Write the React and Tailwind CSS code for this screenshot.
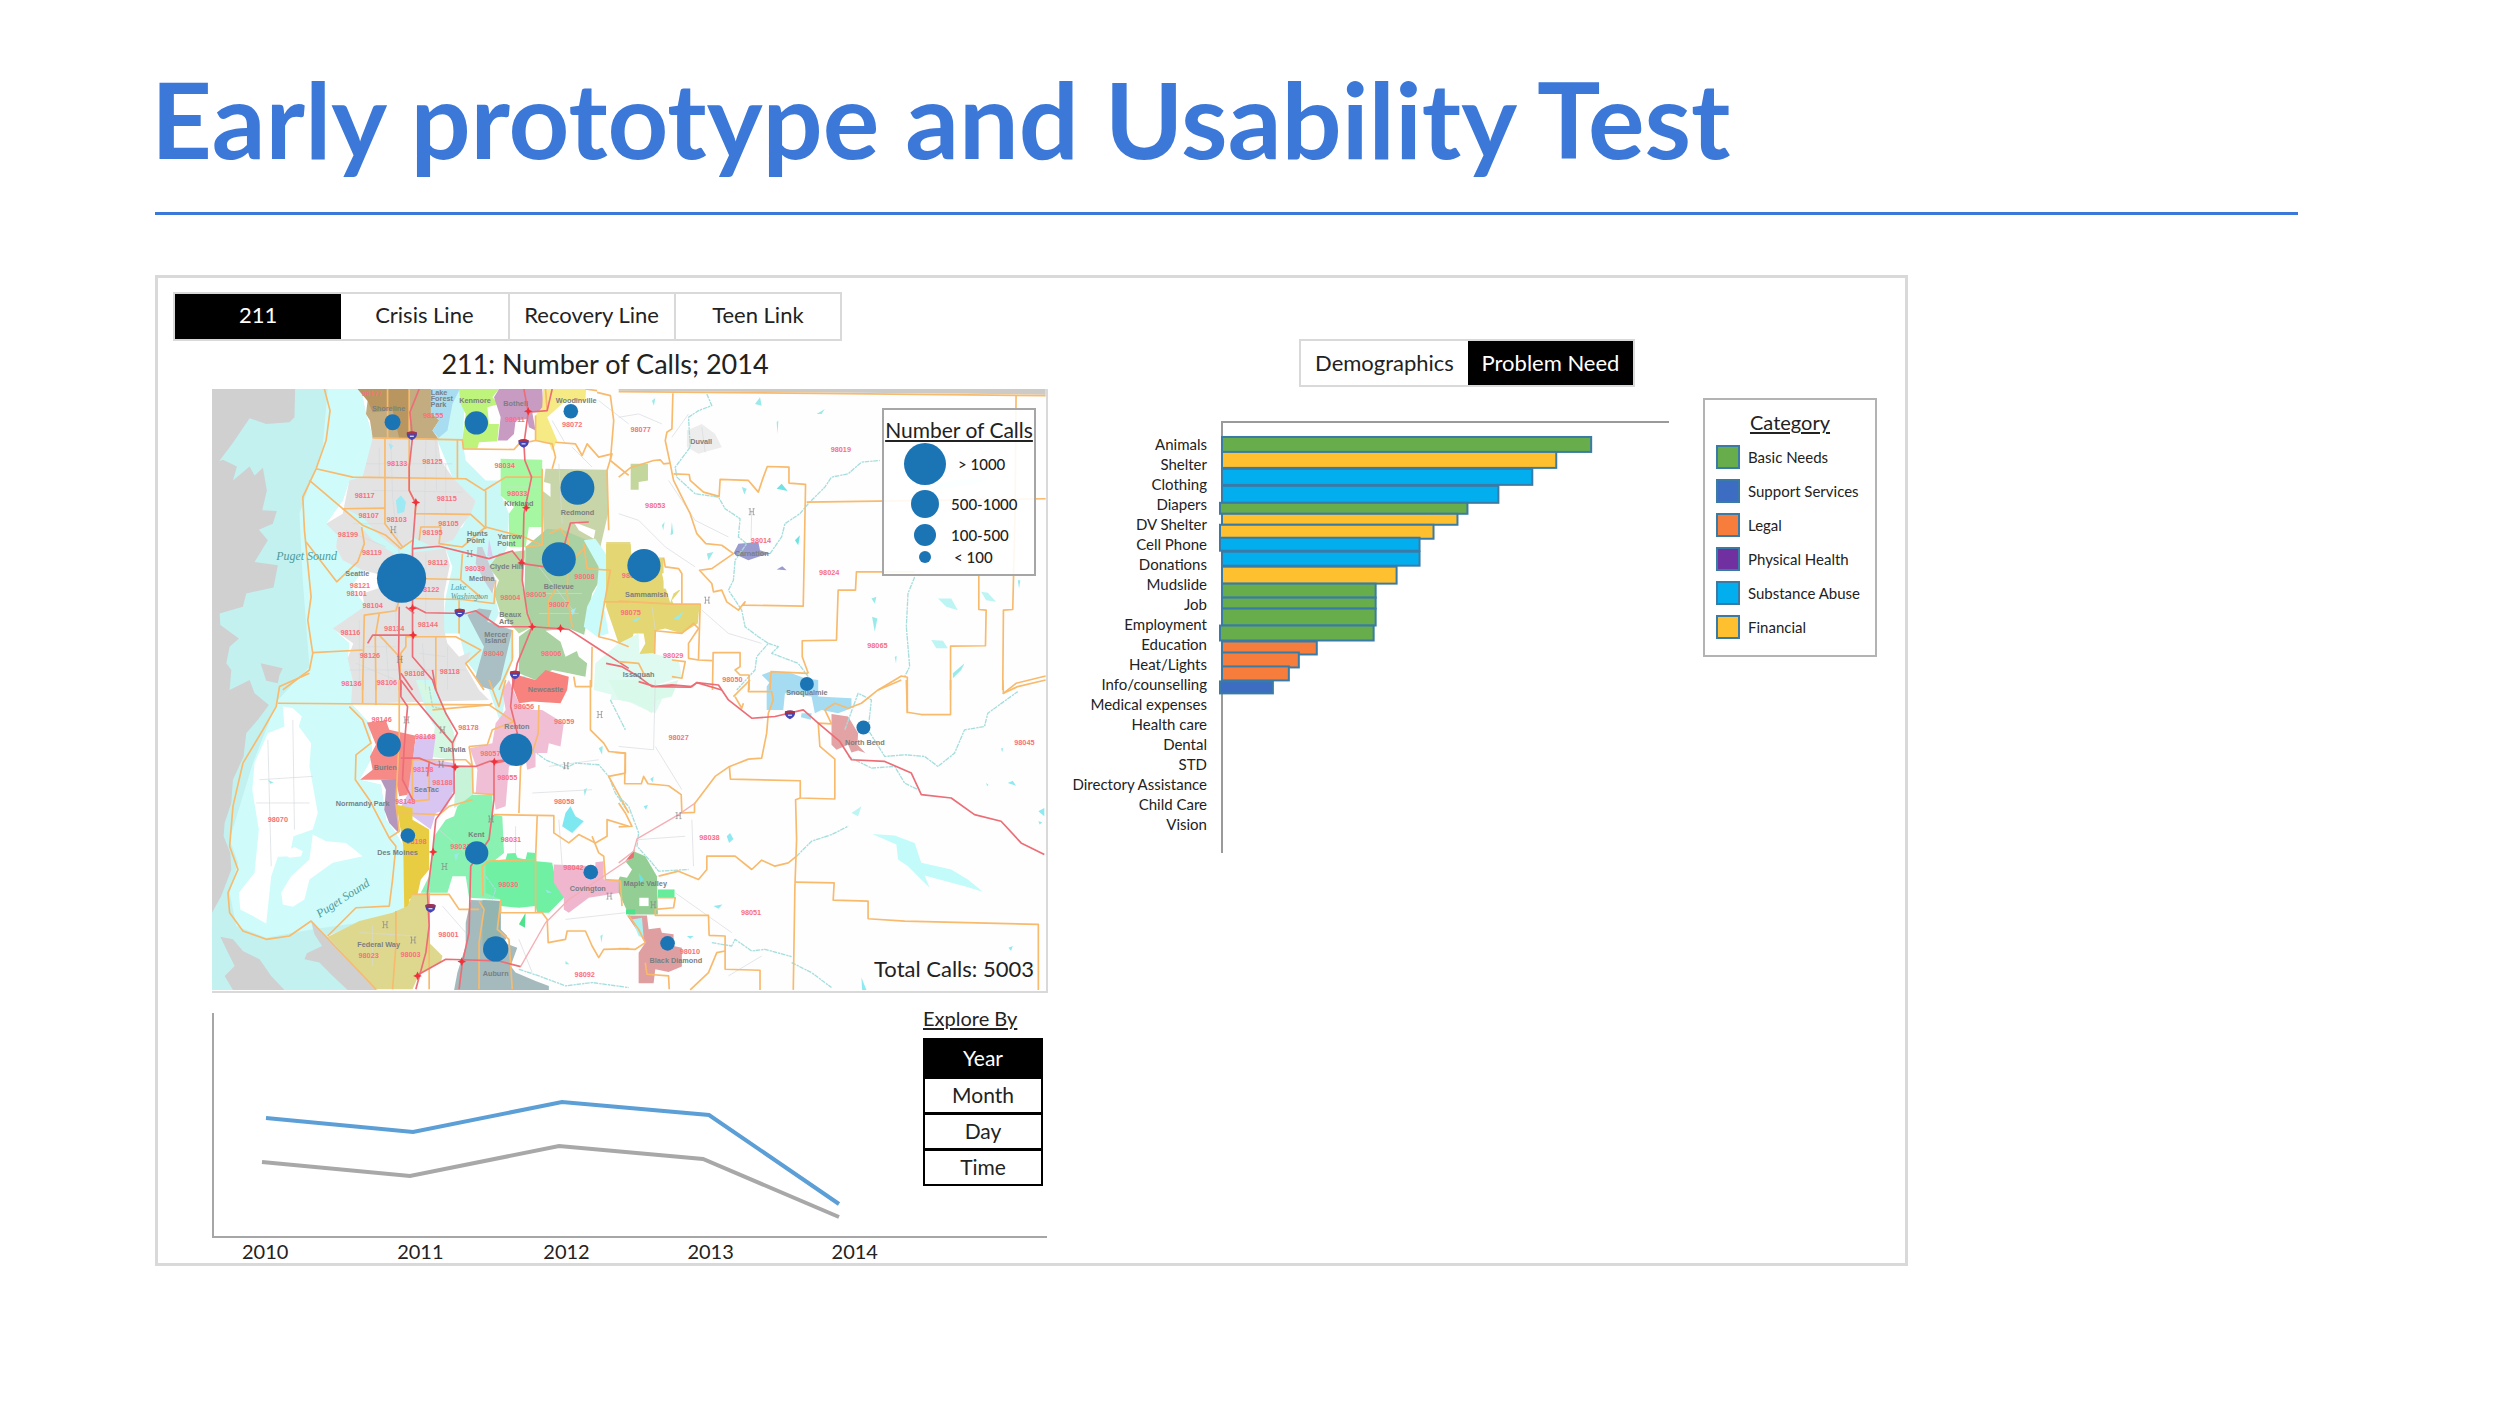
import React from "react";

const tabs = ["211", "Crisis Line", "Recovery Line", "Teen Link"];

/* ---------- map data: each tile has its own origin inside the drawing ---------- */

const NW = {
  areas: [
    ["#c3f1f0", "37,25 485,25 500,100 520,170 520,240 490,290 450,300 430,360 380,430 415,460 410,500 430,540 490,570 455,620 500,680 400,745 450,790 445,830 462,910 460,975 510,1030 520,1130 480,1200 545,1215 560,1320 590,1360 612,1400 615,1590 590,1610 480,1630 385,1670 535,1832 37,1832"],
    ["#cffcfb", "385,25 485,25 500,100 520,170 520,240 490,290 450,300 430,360 380,430 415,460 410,500 430,540 490,570 455,620 500,680 400,745 450,790 445,830 462,910 460,975 510,1030 520,1130 480,1200 545,1215 560,1320 590,1360 612,1400 615,1590 480,1630 340,1650 200,1675 110,1640 90,1540 115,1450 90,1380 160,1150 235,960 330,860 310,600 300,400 370,200"],
    ["#d0d0d0", "37,25 287,25 285,110 270,125 200,130 150,113 125,150 98,190 60,240 37,300"],
    ["#d0d0d0", "37,250 70,238 112,258 100,300 150,258 165,285 190,262 202,330 188,390 232,392 220,430 178,448 205,480 165,545 235,555 222,622 140,640 130,680 60,700 62,735 118,775 90,800 80,850 95,870 90,930 150,900 165,940 208,975 175,1020 140,1060 132,1130 100,1200 95,1270 75,1330 72,1370 92,1420 95,1470 65,1550 37,1600"],
    ["#d0d0d0", "183,850 250,865 240,885 235,910 200,902"],
    ["#d0d0d0", "62,1672 100,1680 130,1715 180,1740 215,1790 255,1832 100,1832 75,1790 105,1760 80,1710"],
    ["#d0d0d0", "335,1625 532,1832 445,1832 400,1790 360,1750 315,1740 322,1722 368,1700 345,1665"],
    ["#ffffff", "250,980 280,985 307,1010 298,1040 335,1090 330,1160 355,1300 340,1350 282,1370 270,1430 235,1432 215,1490 200,1632 160,1610 122,1590 118,1540 165,1480 178,1350 158,1230 165,1150 205,1060 255,1040"],
    ["#ffffff", "340,1365 380,1385 440,1390 490,1430 400,1450 330,1500 315,1560 280,1582 250,1575 245,1540 275,1490 330,1440"],
    ["#ffffff", "250,1420 285,1402 310,1415 305,1430 270,1435"],
    ["#c9f8f7", "720,25 800,25 790,180 800,240 860,300 905,300 905,340 930,400 925,500 875,600 900,700 870,760 940,760 945,830 910,930 1000,870 920,950 905,1030 870,930 800,840 780,760 730,760 740,650 760,560 730,480 790,440 830,360 800,330 760,290 715,180"],
    ["#e3e3e3", "520,172 715,175 725,240 760,290 800,330 830,360 815,400 785,440 762,480 735,490 752,555 735,640 735,750 745,790 780,830 815,815 800,860 840,930 870,960 455,972 460,900 445,835 462,790 400,745 495,680 490,640 610,600 490,570 430,540 410,500 415,465 380,430 430,400 450,300 490,290"],
    ["#c9f8f7", "440,385 495,415 540,465 600,510 640,470 700,500 760,480 790,500 650,515 600,530 520,480 485,440"],
    ["#c3ac80", "475,25 712,25 720,60 695,95 720,120 700,150 718,175 520,172 512,120 500,100 505,60"],
    ["#b9965f", "475,25 632,25 632,172 600,172 580,90 520,95 505,60"],
    ["#a8dcf0", "695,25 782,25 760,70 745,150 718,172 700,150 720,120 695,95"],
    ["#bef37c", "780,25 900,25 880,50 900,70 865,80 870,130 900,130 895,182 840,185 835,205 792,205 790,175 800,100 785,70"],
    ["#c89bc2", "900,25 1030,25 1035,95 1000,95 1010,150 990,140 985,115 950,120 945,160 925,180 897,180 905,110 885,50"],
    ["#f6ea84", "1033,25 1162,25 1160,60 1100,60 1045,110 1075,180 1060,212 1050,185 1010,180 1010,105 1030,80"],
    ["#a6f7a1", "905,235 1030,238 1030,440 990,440 980,500 930,500 930,400 945,380 905,345"],
    ["#c8d5a8", "1040,265 1225,268 1228,400 1205,500 1215,570 1165,600 1110,500 1035,480 1030,330 1055,350 1055,310 1035,305"],
    ["#ffffff", "1125,425 1190,450 1185,475 1140,450"],
    ["#aad1a2", "980,500 1045,445 1095,450 1190,490 1200,570 1215,580 1180,640 1155,770 1160,790 1130,800 1140,830 1165,850 1160,890 1110,880 1060,870 1010,900 960,880 960,770 1000,740 975,700"],
    ["#bcd8a4", "900,520 980,510 970,620 1000,740 960,760 905,700 885,640 900,600 870,560"],
    ["#ffffff", "1040,752 1110,745 1170,770 1160,800 1100,830 1085,785"],
    ["#c9fbfa", "1155,480 1190,475 1255,570 1250,620 1215,680 1230,760 1195,770 1155,740 1165,680 1195,620 1200,560"],
    ["#e3d98c", "1222,485 1295,485 1310,680 1260,670 1225,665 1240,620 1240,560"],
    ["#a9bfc3", "805,705 840,685 878,690 865,725 940,750 905,900 880,930 845,920 830,890 855,800"],
    ["#c8cdd6", "835,500 850,500 890,600 880,640 855,600 830,550"],
    ["#dbcdef", "870,475 882,530 865,528"],
    ["#9de9f4", "590,360 605,345 620,365 615,395 595,400"],
    ["#9de9f4", "1115,690 1132,683 1122,706"],
    ["#9de9f4", "568,188 582,196 574,208"],
  ],
  borders: [
    "375,25 392,90 380,180 350,265 310,350 315,450 325,550 335,650 325,720 340,820 330,870 250,930",
    "350,265 460,290 800,295 855,330 920,290 1030,290",
    "330,300 430,385 557,383", "430,385 490,435 560,465 605,505 640,480",
    "320,485 412,605 475,545 495,490 487,440", "557,175 557,430 610,500",
    "565,25 565,175", "630,25 630,330 650,370 648,400 815,402 862,445", "520,172 790,178 793,205 945,207 960,190 1010,180",
    "775,178 775,295", "860,330 860,440 975,470 1030,495", "660,480 665,440 725,440 720,490 790,500 860,440",
    "640,595 785,598 790,520", "640,655 790,658 885,670 890,600", "780,660 780,760",
    "785,600 850,655", "340,818 490,810", "490,930 495,705 590,692 600,660",
    "530,930 528,770 540,700", "600,930 605,820 620,800 620,770 770,770 845,810 800,850 855,930", "710,770 710,930", "940,750 940,840 900,930",
    "540,765 610,840", "1030,265 1030,495 980,500", "1010,105 1010,180 1060,190 1070,230 1060,265",
    "1070,185 1130,190 1150,225 1165,190 1200,230 1240,220 1225,270 1230,450",
    "1195,35 1235,45 1245,120 1235,240 1290,285", "1040,25 1045,90", "1160,25 1195,30",
    "1050,460 1085,445 1110,480 1105,640 1120,740", "1075,620 1050,660 1050,740", "1160,500 1120,540", "1155,490 1165,565 1235,570 1215,680 1200,770 1240,780 1290,800", "1215,665 1290,665",
    "1180,800 1178,920 1130,920 1125,890",
  ],
  roads: [
    "660,25 632,95 640,170 630,260 630,330 650,370 640,500 640,760 640,830 700,900 710,930",
    "640,505 720,498 810,520 870,535 940,512 970,550 1040,560",
    "975,25 988,95 975,190 978,240 998,290 975,400 970,600 985,700 1000,740 955,850 940,930",
    "645,680 680,698 800,700 830,692 900,740 1000,740 1110,748 1190,800 1290,865",
    "985,95 1045,90 1060,25", "1170,425 1115,428 1095,500", "640,765 520,765 505,790", "600,680 598,840 605,930", "605,880 640,930", "620,680 645,700",
  ],
  thin: [
    "575,175 580,350 600,520", "680,180 675,470", "740,250 740,400", "500,250 760,250", "460,430 560,430", "590,550 590,760", "680,520 680,750", "480,720 480,900", "560,780 570,930", "670,790 680,930", "745,800 745,930", "450,870 800,870", "1020,560 1130,700", "1080,250 1090,430", "1120,200 1180,260", "1060,120 1100,190",
    "710,180 712,330", "540,200 540,290", "520,330 790,335", "440,450 560,500", "700,550 740,560", "500,800 590,800", "660,820 740,830", "470,850 590,900", "1010,640 1150,640", "1020,700 1140,700", "920,320 1020,320", "1200,60 1290,130",
  ],
  zips: [
    [518, 45, "98177"], [702, 112, "98155"], [594, 258, "98133"], [700, 250, "98125"], [496, 352, "98117"], [743, 362, "98115"], [508, 414, "98107"], [592, 424, "98103"], [748, 436, "98105"], [446, 470, "98199"], [700, 465, "98195"], [518, 523, "98119"], [716, 555, "98112"], [482, 622, "98121"], [472, 647, "98101"], [690, 637, "98122"], [520, 683, "98104"], [686, 740, "98144"], [453, 766, "98116"], [585, 754, "98134"], [512, 834, "98126"], [752, 882, "98118"], [646, 888, "98108"], [456, 918, "98136"], [563, 916, "98106"], [917, 262, "98034"], [955, 348, "98033"], [828, 573, "98039"], [934, 660, "98004"], [1012, 650, "98005"], [1080, 680, "98007"], [1157, 595, "98008"], [885, 828, "98040"], [1057, 828, "98006"], [1120, 138, "98072"], [948, 125, "98011"],
  ],
  places: [
    [568, 92, "Shoreline"], [720, 42, "Lake"], [728, 62, "Forest"], [718, 80, "Park"], [828, 67, "Kenmore"], [950, 77, "Bothell"], [1132, 66, "Woodinville"], [960, 377, "Kirkland"], [1136, 405, "Redmond"], [835, 466, "Hunts"], [830, 488, "Point"], [932, 477, "Yarrow"], [922, 497, "Point"], [922, 566, "Clyde Hill"], [848, 602, "Medina"], [1080, 625, "Bellevue"], [474, 586, "Seattle"], [934, 712, "Beaux"], [922, 732, "Arts"], [892, 770, "Mercer"], [890, 790, "Island"],
  ],
};

const NE = {
  areas: [
    ["#cdcbc8", "0,25 1284,25 1284,42 900,38 0,30"],
    ["#c3d69b", "36,250 88,250 88,300 60,305 60,328 36,328"],
    ["#e3d673", "-38,490 36,492 38,530 135,532 135,625 185,630 160,660 165,672 243,672 238,730 190,760 140,745 110,752 108,820 62,822 80,790 75,760 45,760 35,790 0,790 -38,680"],
    ["#ffffff", "130,580 188,570 188,625 165,640 155,668 140,620"],
    ["#9a9bcf", "360,490 420,485 425,510 458,520 425,528 390,540 345,520"],
    ["#9a9bcf", "475,568 492,558 505,570"],
    ["#d5fbfb", "930,330 980,305 1060,292 1125,292 1060,312"],
    ["#bdf4f4", "960,655 1000,655 1020,690 985,680"],
    ["#bdf4f4", "940,780 975,782 990,805 955,805"],
    ["#bdf4f4", "1090,635 1110,638 1135,665 1105,660"],
    ["#dffaf0", "0,790 60,760 62,822 108,822 180,840 190,890 100,920 130,960 110,1000 60,980 0,950 -75,930 -70,850"],
    ["#ededed", "205,150 250,130 290,160 310,200 240,220 205,200"],
    ["#a5dcf2", "458,875 520,880 560,895 600,900 600,950 700,955 700,985 660,1000 610,990 590,1000 580,950 500,940 495,990 445,990 445,920 455,905"],
    ["#a5dcf2", "430,885 455,875 455,910"], ["#a5dcf2", "550,1000 580,1000 578,1020 548,1012"],
    ["#e3a3a5", "640,1002 690,1010 720,1060 718,1095 742,1120 720,1112 700,1118 690,1095 655,1110 640,1095"],
    ["#6fe3e3", "475,325 490,310 508,332"], ["#6fe3e3", "530,480 545,465 540,495"], ["#9aeaea", "410,70 425,50 430,75"], ["#9aeaea", "760,655 775,650 770,670"], ["#9aeaea", "762,710 778,715 770,755"], ["#9aeaea", "1005,880 1040,850 1030,870 1005,895"],
    ["#9aeaea", "100,60 110,52 106,75"], ["#9aeaea", "475,125 480,120 478,160"], ["#9aeaea", "160,425 164,460 156,465"], ["#9aeaea", "370,320 385,325 378,342"], ["#9aeaea", "595,100 620,85 610,100"], ["#9aeaea", "265,520 285,515 270,540"], ["#9aeaea", "165,715 195,695 180,720"], ["#9aeaea", "40,720 72,710 50,725"], ["#9aeaea", "1200,600 1208,600 1204,625"], ["#9aeaea", "130,435 138,425 134,450"], ["#9aeaea", "830,830 836,828 834,850"],
  ],
  borders: [
    "0,33 600,38 1284,45", "163,38 160,145 145,155 140,180 155,250 165,300 190,350 215,400 235,460 262,490 310,495 345,520 280,565 243,570 280,610 285,635 310,630 325,665 360,690 380,665 375,675 555,678 562,312 512,308 512,260 447,258 435,290 420,335 390,300 305,297 302,348 255,335 215,300 212,282 165,280",
    "0,290 35,262 105,240 125,238 135,250 155,248", "1195,45 1192,400 1185,688 1157,690 1155,930",
    "565,365 1284,355", "890,575 715,575 712,630 660,630 655,780 552,782 552,830 570,880",
    "1083,585 1083,688 1105,690 1103,797 998,798 998,930", "135,532 140,560 180,565 190,580 190,672", "0,663 165,672 245,672 240,840 282,842",
    "108,822 110,752 190,760 225,730 240,745 210,790 210,835 240,840", "282,930 284,818 365,818 365,860 350,870 365,885 392,885 392,930", "455,930 458,875 570,880",
    "160,840 200,845 190,895 160,890", "0,845 60,850 80,890", "1284,888 1195,910 1155,942", "780,930 850,888 868,892 868,1000",
  ],
  roads: ["-38,850 10,860 60,890 100,920 160,915 220,920 235,908 310,930"],
  thin: ["0,110 60,100 130,130", "0,400 60,420 140,500 230,560", "250,690 330,760 430,790", "150,300 230,420 330,470", "100,680 110,750", "210,100 160,170", "250,140 260,215", "400,390 398,480"],
  rivers: [
    "265,40 280,75 240,90 210,110 215,200 170,260 175,290 230,340 300,350 320,385 365,415 360,470 385,490 350,540 345,600 330,630 370,690 380,740 420,770 450,790 415,830 410,870 355,930",
    "455,520 490,470 500,430 545,400 570,370 620,320 640,290 690,280 730,245 785,240", "890,590 870,640 865,740 875,860 860,890", "450,790 480,800 460,820 540,850 570,890",
  ],
  zips: [
    [66, 154, "98077"], [668, 214, "98019"], [110, 383, "98053"], [428, 487, "98014"], [633, 585, "98024"], [36, 704, "98075"], [40, 592, "98074"], [164, 835, "98029"], [778, 804, "98065"], [342, 906, "98050"],
  ],
  places: [[248, 190, "Duvall"], [400, 526, "Carnation"], [84, 650, "Sammamish"], [60, 892, "Issaquah"]],
};

const SW = {
  areas: [
    ["#c9f8f7", "650,0 700,0 740,90 765,160 735,180 700,130 680,90"],
    ["#d6f7e2", "650,0 700,20 705,75 740,95 770,180 760,240 690,230 710,130"],
    ["#f58a87", "503,128 560,122 570,150 650,168 645,210 640,280 625,345 600,350 590,300 545,300 482,300 520,270 512,230 530,195"],
    ["#b397bc", "545,300 592,298 598,460 570,430 555,390 560,330"],
    ["#d9c5f1", "650,170 710,165 700,240 765,250 768,320 740,390 710,400 695,450 640,410 600,390 625,345 640,240"],
    ["#c7f3d9", "770,255 822,262 822,365 790,370 765,385 768,320"],
    ["#f0bfd5", "812,205 880,190 890,130 920,90 910,30 930,0 960,70 1000,90 1030,90 1095,130 1085,200 1050,190 1045,220 1010,220 1010,262 985,270 980,240 930,260 920,380 890,390 885,345 830,340 835,270"],
    ["#f8837e", "935,-20 1010,0 1040,-30 1110,-10 1105,30 1085,70 1000,65 960,70 945,30"],
    ["#e8cd43", "592,375 640,385 640,420 690,450 690,570 665,600 655,645 630,660 635,690 615,685 612,500"],
    ["#89f1b1", "820,345 880,345 882,405 910,410 915,520 890,540 905,660 810,655 800,590 760,590 745,640 665,640 690,590 705,470 740,420 765,410 775,380"],
    ["#6ff0a3", "860,545 920,540 925,522 950,520 955,535 980,540 985,518 1010,520 1012,545 1060,550 1070,600 1100,650 1050,700 1015,700 1010,680 960,685 905,680 905,660 860,640"],
    ["#efb6ce", "1065,555 1190,560 1190,548 1215,545 1215,600 1265,600 1265,640 1170,655 1110,700 1095,690 1095,655 1065,610"],
    ["#ded88f", "385,772 440,745 480,725 580,700 625,680 640,645 685,640 690,790 730,830 725,850 660,885 640,930 530,930"],
    ["#a4babd", "815,662 905,665 905,750 925,770 915,790 955,805 935,860 950,880 1010,905 1050,920 1050,932 765,932 775,880 800,800 800,730"],
    ["#93b5b2", "850,662 905,665 905,790 850,800"],
    ["#81c58a", "1265,590 1290,585 1290,680 1275,670"],
    ["#7de8f0", "1115,380 1130,410 1155,425 1120,460 1090,440 1100,400"],
    ["#4fe28c", "980,700 978,745 960,735"],
    ["#dffaf0", "1250,-10 1290,-80 1290,60 1235,60"],
    ["#9aeaea", "1200,205 1212,198 1210,225"], ["#9aeaea", "1155,330 1165,325 1158,350"], ["#9aeaea", "1040,630 1060,640 1045,640"], ["#9aeaea", "1205,770 1212,765 1208,790"], ["#9aeaea", "765,525 780,520 770,545"], ["#9aeaea", "205,300 222,308 212,312"], ["#9aeaea", "1100,845 1112,855 1100,855"],
  ],
  borders: [
    "330,-20 240,20 230,80 190,150 130,250 100,380 90,500 115,570 85,640 90,700 130,755 200,780 270,770 335,725 530,930",
    "235,70 870,75 880,70", "450,80 490,120 515,190 470,225 468,300 510,360 570,475 600,455 590,370 600,170 600,0", "570,475 590,500 580,600 570,680 470,685 385,770",
    "530,0 530,75", "490,0 490,70", "700,90 870,75 945,125 880,150 865,195 810,200", "810,200 820,260 822,340 885,345", "600,400 720,405 750,380 820,360", "640,240 690,240 690,360 640,365 640,240 800,240 820,260",
    "1020,75 1018,160 1000,220 965,260 960,400", "885,405 1065,408 1065,460 1110,490 1140,465 1190,490 1225,470 1225,420 1290,440", "1175,0 1175,150 1215,190 1230,215 1280,220 1280,280 1230,290 1290,400",
    "1015,408 1010,540 870,545 850,560 852,650", "905,660 905,700 1030,700 1045,720 1048,790 1100,780 1105,755 1160,755 1180,800 1200,835 1215,810 1290,808", "640,645 750,645 780,690 840,690",
    "590,695 590,800 580,930", "840,665 855,690 840,790 840,930", "905,665 895,750 930,780 940,930", "1180,470 1200,520 1215,530 1220,600 1265,605 1270,680", "870,0 900,80 920,0", "690,640 690,930", "1010,540 1010,700",
  ],
  roads: [
    "605,0 605,50 625,80 615,200 610,300 640,360", "605,0 650,60 700,120 760,190 765,260 765,340 710,420 700,520 685,640 690,740 680,820 650,930",
    "700,-30 710,30 740,100 775,160 760,190", "605,235 660,235 710,255 765,260 830,260 870,245 930,240", "945,-20 935,80 955,160", "955,160 940,240 885,250 885,360 870,480 815,560 810,760 790,850 780,930",
    "650,890 740,840 900,845 965,862", "690,250 685,290",
  ],
  lightRoads: ["965,862 1040,730 1110,660 1290,540"],
  thin: [
    "170,370 330,370", "205,180 215,560", "280,120 285,450", "180,300 340,290", "1000,340 1180,330", "1080,420 1090,560", "730,680 800,760", "960,780 1000,880", "1100,720 1280,700", "480,760 650,770", "520,860 520,740", "1050,260 1200,240", "720,450 800,520", "950,440 950,520",
  ],
  rivers: ["1000,210 1040,240 1100,265 1130,250 1200,255 1230,290 1250,340 1290,400", "860,590 890,630 880,660", "960,870 1020,890 1100,920 1180,910 1290,925", "690,20 700,80 740,90", "1235,60 1280,150"],
  zips: [
    [547, 127, "98146"], [678, 177, "98168"], [808, 152, "98178"], [975, 87, "98056"], [1096, 133, "98059"], [874, 228, "98057"], [672, 278, "98158"], [730, 316, "98188"], [925, 300, "98055"], [235, 427, "98070"], [618, 372, "98148"], [652, 492, "98198"], [1096, 373, "98058"], [936, 487, "98031"], [784, 509, "98032"], [928, 624, "98030"], [1124, 573, "98042"], [508, 836, "98023"], [634, 832, "98003"], [748, 774, "98001"], [1158, 894, "98092"],
  ],
  places: [
    [1040, 37, "Newcastle"], [954, 146, "Renton"], [760, 217, "Tukwila"], [558, 272, "Burien"], [682, 338, "SeaTac"], [490, 378, "Normandy Park"], [595, 527, "Des Moines"], [832, 473, "Kent"], [1167, 634, "Covington"], [538, 803, "Federal Way"], [890, 890, "Auburn"],
  ],
};

const SE = {
  areas: [
    ["#d9faea", "-30,0 90,0 110,20 180,0 160,50 115,60 100,100 50,70 0,60"],
    ["#93cf95", "20,545 45,515 80,530 115,590 118,705 30,705 0,640 0,600"],
    ["#ffffff", "0,560 20,545 40,570 25,595 0,590"], ["#ffffff", "62,655 90,655 90,680 62,680"],
    ["#67ec9b", "118,630 168,630 168,655 118,655"], ["#4fe28c", "22,690 50,690 50,705 22,705"],
    ["#df9fa1", "25,708 85,708 90,750 125,745 130,760 165,765 165,800 190,805 190,862 150,878 110,870 105,912 60,912 60,820 80,790"],
    ["#a9f2f2", "40,720 70,715 75,775 60,770"],
    ["#c3fbfa", "762,463 830,468 890,490 910,550 1000,570 1050,600 1095,637 1040,620 920,588 935,625 900,590 870,560 840,540 835,495"],
    ["#bdf4f4", "700,400 730,380 720,410"], ["#8eeaf0", "325,470 335,460 345,478 332,490"], ["#8eeaf0", "1170,310 1185,303 1195,318"], ["#8eeaf0", "1262,395 1280,385 1280,410"], ["#8eeaf0", "730,895 745,932 732,932"], ["#8eeaf0", "285,680 312,675 300,688"],
    ["#e97070", "20,545 48,508 45,535"], ["#6fe3e3", "60,580 75,600 65,610"],
    ["#8eeaf0", "75,380 88,375 82,390"], ["#8eeaf0", "95,298 105,290 102,308"], ["#8eeaf0", "1105,310 1112,315 1108,320"], ["#8eeaf0", "1262,425 1274,428 1266,435"], ["#8eeaf0", "1172,805 1185,800 1180,815"], ["#8eeaf0", "205,770 225,770 215,778"], ["#8eeaf0", "1150,205 1156,205 1153,218"],
  ],
  borders: [
    "-10,218 20,220 18,312 68,312 75,290 88,312 150,318 188,345 190,400 228,398 228,372", "0,370 20,400 40,440 0,442",
    "228,372 260,330 290,290 330,262 390,238 430,235 445,160 450,100 465,60 460,35 390,35 392,0", "333,262 336,298 546,303 546,355 650,358 650,238 605,200 600,130 640,132 620,90 650,70 690,85 730,70 780,30 850,0",
    "546,355 532,360 535,480 530,620 525,932", "535,530 510,550 470,560 430,542 400,570 350,530 265,530 265,570 240,600 180,575 120,590", "532,608 648,610 645,662 750,665 750,718 860,725 1262,735 1262,932",
    "118,655 170,655 165,685 110,690 110,708 270,708 272,768 320,770 320,870 425,873 425,932", "320,815 295,820 270,880 215,932", "0,808 50,810 80,790 60,750 30,708", "80,850 85,885 150,890 152,930",
    "865,0 868,97 910,104 998,104 998,0", "350,50 370,85 375,70", "345,50 395,0", "1155,0 1157,40 1200,20 1284,0",
  ],
  roads: ["60,5 110,20 215,22 235,8 300,15 330,60 400,115 470,110 555,90 600,130 665,185 700,240 800,245 880,280 910,345 1000,355 1070,405 1150,425 1210,490 1280,525"],
  lightRoads: ["0,550 45,515 55,478 180,405 230,370"],
  thin: ["110,200 190,330", "220,420 225,560", "170,640 340,760", "0,200 105,210 110,0", "60,480 200,470", "330,890 430,830"],
  rivers: ["0,350 30,380 60,460 55,500 100,550 120,575 210,570", "280,790 340,800 350,780 400,815 440,810 520,832", "520,850 580,880 640,925", "535,530 580,485 640,465 690,440", "680,150 720,40 760,60 750,150 800,230 860,225 920,230 960,260 1010,220 1040,150 1100,140 1110,100 1200,35", "690,230 760,265 830,260 860,310 900,330"],
  zips: [[180, 182, "98027"], [1220, 195, "98045"], [273, 481, "98038"], [398, 708, "98051"], [214, 825, "98010"]],
  places: [[566, 45, "Snoqualmie"], [740, 196, "North Bend"], [80, 620, "Maple Valley"], [172, 852, "Black Diamond"]],
};

const shields = [[638, 165], [974, 188], [782, 698], [948, 884], [1775, 1004], [694, 1586]];
const ramps = [
  [582, 448], [812, 520], [602, 838], [622, 1020], [730, 1050], [726, 1153], [876, 1318], [736, 1461], [558, 1636], [642, 1682], [1203, 1004], [1102, 1158], [1232, 1550], [1660, 394], [1526, 660], [1440, 1308], [1364, 1576],
];
const junctions = [
  [988, 92], [982, 382], [968, 548], [1000, 740], [1085, 745], [640, 684], [642, 765], [768, 1162], [886, 1146], [655, 1790], [788, 1747], [650, 366], [702, 1417],
];
const calls = [
  [580, 125, 24], [832, 127, 35], [1116, 92, 22], [1136, 322, 51], [1080, 537, 51], [607, 594, 74], [1336, 556, 50],
  [569, 1095, 36], [951, 1110, 49], [626, 1368, 22], [833, 1420, 35], [1176, 1478, 22], [890, 1709, 38],
  [1826, 912, 21], [1996, 1043, 21], [1407, 1692, 22],
];

function TileLines({ data, x, y }) {
  return (
    <g transform={`translate(${x} ${y})`} fill="none" strokeLinejoin="round">
      {data.thin.map((p) => (
        <polyline key={p} points={p} stroke="#d5dade" strokeWidth="2" />
      ))}
      {(data.rivers || []).map((p) => (
        <polyline key={p} points={p} stroke="#a5dedd" strokeWidth="4" strokeDasharray="14 3 7 2" />
      ))}
      {data.borders.map((p) => (
        <polyline key={p} points={p} stroke="#f8ba6c" strokeWidth="5" />
      ))}
      {(data.lightRoads || []).map((p) => (
        <polyline key={p} points={p} stroke="#f5aeb4" strokeWidth="4" />
      ))}
      {data.roads.map((p) => (
        <polyline key={p} points={p} stroke="#ec6d76" strokeWidth="5" />
      ))}
    </g>
  );
}

function TileLabels({ data, x, y }) {
  return (
    <g transform={`translate(${x} ${y})`} textAnchor="middle" fontWeight="700">
      {data.zips.map(([cx, cy, t]) => (
        <text key={t} x={cx} y={cy} fill="#f8717b" fontSize="22">{t}</text>
      ))}
      {data.places.map(([cx, cy, t]) => (
        <text key={t + cx} x={cx} y={cy} fill="#7a8082" fontSize="22">{t}</text>
      ))}
    </g>
  );
}

const tiles = [[NW, 0, 0], [NE, 1260, 0], [SW, 0, 900], [SE, 1260, 900]];

function CountyMap() {
  return (
    <svg viewBox="37 25 2508 1809" className="block w-full font-['Liberation_Sans',sans-serif]" role="img" aria-label="Map of calls by area">
      <rect x="37" y="25" width="2508" height="1809" fill="#fefefe" />
      {tiles.map(([d, x, y], i) => (
        <g key={i} transform={`translate(${x} ${y})`}>
          {d.areas.map(([fill, p]) => (
            <polygon key={p} points={p} fill={fill} />
          ))}
        </g>
      ))}
      {tiles.map(([d, x, y], i) => (
        <TileLines key={i} data={d} x={x} y={y} />
      ))}
      {junctions.map(([x, y]) => (
        <path key={`${x}-${y}`} d={`M${x - 13} ${y}L${x - 4} ${y - 4}L${x} ${y - 13}L${x + 4} ${y - 4}L${x + 13} ${y}L${x + 4} ${y + 4}L${x} ${y + 13}L${x - 4} ${y + 4}Z`} fill="#f2303a" />
      ))}
      {ramps.map(([x, y]) => (
        <path key={`${x}-${y}`} d={`M${x - 5} ${y - 9}v18m10 -18v18m-10 -9h10m-14 -9h6m6 0h6m-18 18h6m6 0h6`} stroke="#858585" strokeWidth="2" fill="none" />
      ))}
      {shields.map(([x, y]) => (
        <g key={`${x}-${y}`}>
          <path d={`M${x - 15} ${y - 9}q15 -6 30 0q3 16 -15 23q-18 -7 -15 -23Z`} fill="#4545b5" />
          <path d={`M${x - 15} ${y - 9}q15 -6 30 0v5h-30Z`} fill="#a83246" />
          <path d={`M${x - 6} ${y + 2}h12`} stroke="#fff" strokeWidth="3" />
        </g>
      ))}
      {tiles.map(([d, x, y], i) => (
        <TileLabels key={i} data={d} x={x} y={y} />
      ))}
      <g fill="#4d9b9b" fontStyle="italic" className="font-['Liberation_Serif',serif]">
        <text x="230" y="540" fontSize="36">Puget Sound</text>
        <text transform="translate(360 1616) rotate(-33)" fontSize="36">Puget Sound</text>
        <text x="755" y="628" fontSize="24">Lake</text>
        <text x="755" y="656" fontSize="24">Washington</text>
      </g>
      {calls.map(([x, y, r]) => (
        <circle key={`${x}-${y}`} cx={x} cy={y} r={r} fill="#1b75b5" />
      ))}
    </svg>
  );
}

const sizes = [
  ["> 1000", "size-[42px]", "h-11", "pl-3"],
  ["500-1000", "size-[28px]", "h-9", "pl-[5px]"],
  ["100-500", "size-[22px]", "h-[26px]", "pl-[5px]"],
  ["< 100", "size-[12px]", "h-[18px]", "pl-2"],
];

function CallsLegend() {
  return (
    <div className="absolute top-[19px] right-[10px] w-[154px] border-2 border-[#a6a6a6] bg-white/90 pt-2 pb-2">
      <h3 className="text-center text-[21px] leading-6 whitespace-nowrap underline underline-offset-2">Number of Calls</h3>
      <ul>
        {sizes.map(([label, dot, row, pad]) => (
          <li key={label} className={`flex items-center ${row}`}>
            <span className="flex shrink-0 basis-[62px] justify-center pl-5">
              <span className={`shrink-0 rounded-full bg-[#1b75b5] ${dot}`} />
            </span>
            <span className={`text-[15px] leading-4 font-medium whitespace-nowrap ${pad}`}>{label}</span>
          </li>
        ))}
      </ul>
    </div>
  );
}

const years = ["2010", "2011", "2012", "2013", "2014"];

function Trend() {
  return (
    <div className="mt-5">
      <div className="relative">
        <svg viewBox="212 1013 836 226" className="block w-full" role="img" aria-label="Calls by year">
          <path d="M213 1013V1237H1047" fill="none" stroke="#a6a6a6" strokeWidth="2" />
          <polyline points="266,1118 413,1132 562,1102 709,1115 839,1204" fill="none" stroke="#5b9fd6" strokeWidth="4" />
          <polyline points="262,1162 410,1176 559,1146 703,1159 839,1217" fill="none" stroke="#a8a8a8" strokeWidth="4" />
        </svg>
        <fieldset className="absolute top-[-7px] right-[5px] w-[120px]">
          <legend className="text-xl leading-6 underline underline-offset-2">Explore By</legend>
          <div className="mt-2 flex flex-col text-[21px] leading-6">
            <button className="h-10 border-2 border-black bg-black text-white">Year</button>
            {["Month", "Day", "Time"].map((t) => (
              <button key={t} className="-mt-px h-[37px] border-2 border-black bg-white">{t}</button>
            ))}
          </div>
        </fieldset>
      </div>
      <ol className="grid w-[88%] grid-cols-[155fr_146fr_144fr_144fr_116fr] pl-[30px] text-xl leading-6">
        {years.map((y) => (
          <li key={y}>{y}</li>
        ))}
      </ol>
    </div>
  );
}

const needs = [
  "Animals", "Shelter", "Clothing", "Diapers", "DV Shelter", "Cell Phone", "Donations", "Mudslide", "Job", "Employment",
  "Education", "Heat/Lights", "Info/counselling", "Medical expenses", "Health care", "Dental", "STD", "Directory Assistance", "Child Care", "Vision",
];

const G = "#67ad4c", Y = "#fec02f", B = "#03aeee", O = "#f77d3c", S = "#3d6dc2";
/* left, top, right, bottom, fill */
const bars = [
  [1222, 437, 1592, 452, G], [1222, 452, 1557, 468, Y], [1222, 469, 1533, 485, B], [1222, 486, 1499, 503, B],
  [1220, 503, 1468, 514, G], [1222, 514, 1458, 525, Y], [1220, 525, 1434, 539, Y], [1220, 538, 1420, 551, B],
  [1222, 552, 1420, 566, B], [1222, 567, 1397, 584, Y], [1222, 584, 1376, 598, G], [1222, 598, 1376, 609, G],
  [1222, 609, 1376, 626, G], [1220, 626, 1374, 641, G], [1222, 642, 1317, 655, O], [1222, 653, 1299, 668, O],
  [1222, 667, 1289, 681, O], [1220, 682, 1273, 694, S],
];

const categories = [
  ["Basic Needs", "bg-[#67ad4c]"], ["Support Services", "bg-[#3d6dc2]"], ["Legal", "bg-[#f77d3c]"],
  ["Physical Health", "bg-[#7030a0]"], ["Substance Abuse", "bg-[#03aeee]"], ["Financial", "bg-[#fec02f]"],
];

export default function App() {
  return (
    <main className="min-h-screen bg-white pr-[202px] pb-[141px] pl-[155px] font-['Lato',sans-serif] text-[#222]">
      <h1 className="-ml-1 pt-[54px] text-[106px] leading-[128px] font-bold whitespace-nowrap text-[#3c78d8]">Early prototype and Usability Test</h1>
      <hr className="mt-[30px] border-t-[3px] border-[#3c78d8]" />
      <div className="mt-[60px] grid grid-cols-[1753fr_390fr]">
        <section className="grid grid-cols-[890fr_857fr] border-3 border-[#d9d9d9]">
          <div className="pt-[14px] pl-[15px]">
            <nav className="mr-[206px] grid grid-cols-4 border-2 border-[#d9d9d9] text-[22px] leading-6">
              {tabs.map((t, i) => (
                <button key={t} className={`h-[45px] pb-1 whitespace-nowrap ${i === 0 ? "bg-black text-white" : i > 1 ? "border-l-2 border-[#d9d9d9]" : ""}`}>{t}</button>
              ))}
            </nav>
            <div className="pl-[39px]">
              <h2 className="pt-[7px] pr-[50px] pb-[9px] text-center text-[27px] leading-8">211: Number of Calls; 2014</h2>
              <div className="relative border-r-2 border-b-2 border-[#d9d9d9]">
                <CountyMap />
                <CallsLegend />
                <p className="absolute right-3 bottom-2 text-[22px] leading-7">Total Calls: 5003</p>
              </div>
              <Trend />
            </div>
          </div>

          <div className="pt-[61px]">
            <div className="ml-[251px] grid w-[336px] grid-cols-[169fr_167fr] border-2 border-[#d9d9d9] text-[22px] leading-6">
              <button className="h-11 whitespace-nowrap">Demographics</button>
              <button className="h-11 bg-black whitespace-nowrap text-white">Problem Need</button>
            </div>
            <div className="mt-[11px] flex items-start">
              <ul className="w-[159px] shrink-0 pt-9 text-right text-[15px] leading-5">
                {needs.map((n) => (
                  <li key={n} className="whitespace-nowrap">{n}</li>
                ))}
              </ul>
              <svg viewBox="1219 421 451 434" className="mt-[23px] ml-3 block min-w-0 flex-1" role="img" aria-label="Calls by problem need">
                <path d="M1670 422H1222V854" fill="none" stroke="#9a9a9a" strokeWidth="2" />
                {bars.map(([l, t, r, b, fill]) => (
                  <rect key={t} x={l} y={t} width={r - l} height={b - t} fill={fill} stroke="#3a7ba6" strokeWidth="2" />
                ))}
              </svg>
              <div className="mr-7 ml-[34px] w-[174px] shrink-0 border-2 border-[#b3b3b3] px-[11px] pt-[6px] pb-4">
                <h3 className="text-center text-xl leading-8 underline underline-offset-2">Category</h3>
                <ul className="mt-[7px] flex flex-col gap-[10px]">
                  {categories.map(([name, bg]) => (
                    <li key={name} className="flex items-center gap-2 text-[15px] leading-6 whitespace-nowrap">
                      <span className={`size-6 shrink-0 border-2 border-[#3a7ba6] ${bg}`} />
                      {name}
                    </li>
                  ))}
                </ul>
              </div>
            </div>
          </div>
        </section>
      </div>
    </main>
  );
}
